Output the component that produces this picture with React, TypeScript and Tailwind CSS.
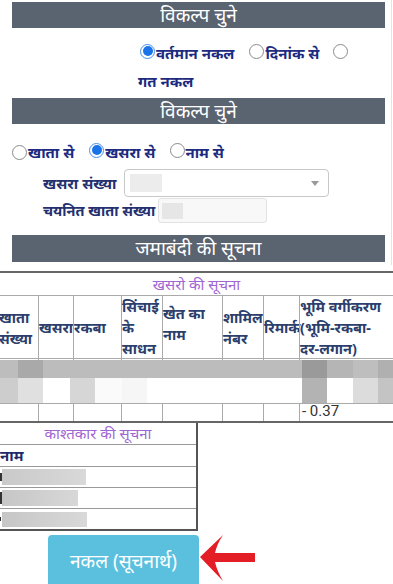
import React from "react";

const FONT = "font-[family-name:'Noto_Sans','Noto_Sans_Devanagari',sans-serif]";

function Radio({ checked = false }: { checked?: boolean }) {
  if (checked) {
    return (
      <span className="inline-block shrink-0 w-[15px] h-[15px] rounded-full border-[1.5px] border-[#4a8fe8] p-[1.5px] bg-white">
        <span className="block w-full h-full rounded-full bg-[#1a73e8]" />
      </span>
    );
  }
  return <span className="inline-block shrink-0 w-[15px] h-[15px] rounded-full border border-[#8a8a8a] bg-white" />;
}

function Bar({ text, h }: { text: string; h: string }) {
  return (
    <div className={`ml-[12px] w-[373px] ${h} bg-[#5a6370] flex items-center justify-center text-white text-[19px] leading-none`}>
      {text}
    </div>
  );
}

const COLS = "grid grid-cols-[38px_35px_48px_41px_60px_41px_36px_1fr]";

function Lines({ h, children }: { h: string; children?: React.ReactNode[] }) {
  const cells = Array.from({ length: 8 }, (_, i) => i);
  return (
    <div className={`${COLS} ${h}`}>
      {cells.map((i) => (
        <div key={i} className={i === 0 ? "" : "border-l border-[#aaaaaa]"}>
          {children ? children[i] : null}
        </div>
      ))}
    </div>
  );
}

export default function App() {
  const headers: React.ReactNode[] = [
    <>खाता<br />संख्या</>,
    "खसरा",
    "रकबा",
    <>सिंचाई<br />के<br />साधन</>,
    <>खेत का<br />नाम</>,
    <>शामिल<br />नंबर</>,
    "रिमार्क",
    <>भूमि वर्गीकरण<br />(भूमि-रकबा-<br />दर-लगान)</>,
  ];
  const strip1: [number, string][] = [
    [18, "#bdbdbd"], [25, "#a9a9a9"], [259, "#bcbcbc"], [25, "#9a9a9a"], [26, "#b5b5b5"], [25, "#bebebe"], [15, "#b0b0b0"],
  ];
  const strip2: [number, string][] = [
    [18, "#cdcdcd"], [25, "#e0e0e0"], [27, "#ffffff"], [25, "#d6d6d6"], [27, "#fafafa"], [25, "#f6f6f6"], [155, "#ffffff"], [25, "#b3b3b3"], [26, "#ffffff"], [25, "#dcdcdc"], [15, "#c4c4c4"],
  ];
  return (
    <div className={`w-[393px] h-[584px] overflow-hidden bg-white ${FONT}`}>
      <div className="w-[392px] border-r border-[#e4e4e4] pt-[2px] pb-[3px]">
        <Bar text="विकल्प चुने" h="h-[26px]" />
        <div className="pl-[138px] mt-[11px] text-[15px] font-bold text-[#1c2a80]">
          <div className="h-[28px] flex items-center">
            <span className="ml-[2px]"><Radio checked /></span>
            <span className="ml-[1px]">वर्तमान नकल</span>
            <span className="ml-[15px]"><Radio /></span>
            <span className="ml-[1px]">दिनांक से</span>
            <span className="ml-[14px]"><Radio /></span>
          </div>
          <div className="h-[28px] flex items-center">गत नकल</div>
        </div>
        <div className="mt-[3px]">
          <Bar text="विकल्प चुने" h="h-[26px]" />
        </div>
        <div className="pl-[12px] mt-[14px] h-[28px] flex items-center text-[15px] font-bold text-[#1c2a80]">
          <Radio />
          <span className="ml-[1px]">खाता से</span>
          <span className="ml-[15px]"><Radio checked /></span>
          <span className="ml-[1px]">खसरा से</span>
          <span className="ml-[15px]"><Radio /></span>
          <span className="ml-[0px]">नाम से</span>
        </div>
        <div className="pl-[43px] mt-[3px] flex items-center text-[15px] font-bold text-[#24306e]">
          <span className="w-[81px] whitespace-nowrap">खसरा संख्या</span>
          <div className="w-[205px] h-[28px] rounded-[4px] border border-[#c8c8c8] bg-white flex items-center px-[5px]">
            <div className="w-[32px] h-[18px] bg-[#ececec]" />
            <div className="ml-auto mr-[4px] w-0 h-0 border-l-[4px] border-r-[4px] border-t-[5px] border-l-transparent border-r-transparent border-t-[#999999]" />
          </div>
        </div>
        <div className="pl-[43px] mt-[1px] flex items-center text-[14.5px] font-bold text-[#24306e]">
          <span className="whitespace-nowrap mr-[3px]">चयनित खाता संख्या</span>
          <div className="w-[109px] h-[25px] rounded-[3px] border border-[#e2e2e2] bg-[#f8f8f8] flex items-center px-[3px]">
            <div className="w-[21px] h-[16px] bg-[#e6e6e6]" />
          </div>
        </div>
        <div className="mt-[12px]">
          <Bar text="जमाबंदी की सूचना" h="h-[27px]" />
        </div>
      </div>

      <div className="mt-[6px] border-t-2 border-b-2 border-[#666666]">
        <div className="h-[22px] flex items-center justify-center text-[15px] text-[#a066d3]">खसरो की सूचना</div>
        <div className={`${COLS} h-[63px] border-t border-[#aaaaaa] text-[14.5px] font-bold leading-[21px] text-[#2b3e6c]`}>
          {headers.map((h, i) => (
            <div key={i} className={`flex items-center whitespace-nowrap ${i === 0 ? "-ml-[1px]" : "border-l border-[#aaaaaa]"}`}>
              <span className={i === 4 ? "-mt-[7px]" : ""}>{h}</span>
            </div>
          ))}
        </div>
        <div className="border-t border-[#aaaaaa]">
          <Lines h="h-[1px]" />
          <div className="flex h-[18px]">
            {strip1.map(([w, c], i) => (
              <div key={i} className="h-full" style={{ width: w, background: c }} />
            ))}
          </div>
          <div className="flex h-[25px]">
            {strip2.map(([w, c], i) => (
              <div key={i} className="h-full" style={{ width: w, background: c }} />
            ))}
          </div>
        </div>
        <div className="border-t border-[#aaaaaa]">
          <Lines h="h-[17px]">
            {[null, null, null, null, null, null, null,
              <span key="v" className="block pl-[2px] text-[15px] leading-[15px] text-[#333333] font-[family-name:Roboto,sans-serif]">- 0.37</span>]}
          </Lines>
        </div>
      </div>

      <div className="w-[198px] border-r-2 border-b-2 border-[#555555]">
        <div className="h-[22px] flex items-center justify-center text-[15px] text-[#a066d3] border-b border-[#999999]">
          काश्तकार की सूचना
        </div>
        <div className="h-[22px] flex items-center text-[15px] font-bold text-[#1d2a6a] border-b border-[#999999]">नाम</div>
        <div className="h-[21px] flex items-center border-b border-[#999999]">
          <div className="w-[2px] h-[8px] bg-[#333333]" />
          <div className="w-[84px] h-[16px] bg-gradient-to-r from-[#c9c9c9] to-[#d9d9d9]" />
        </div>
        <div className="h-[21px] flex items-center border-b border-[#999999]">
          <div className="w-[2px] h-[12px] bg-[#333333]" />
          <div className="w-[76px] h-[16px] bg-gradient-to-r from-[#c6c6c6] to-[#d8d8d8]" />
        </div>
        <div className="h-[20px] flex items-center">
          <div className="w-[1px] h-[4px] bg-[#333333]" />
          <div className="ml-[1px] w-[85px] h-[15px] bg-gradient-to-r from-[#c6c6c6] to-[#d9d9d9]" />
        </div>
      </div>

      <div className="mt-[4px] flex items-start">
        <div className="ml-[48px] w-[151px] h-[52px] rounded-[4px] bg-[#5bc0de] flex items-center justify-center text-white text-[19px]">
          नकल (सूचनार्थ)
        </div>
        <svg width="60" height="50" viewBox="0 0 60 50" className="-mt-[1px]">
          <path
            d="M1 23 L24 1 Q18 10 16 19 L56 19 L56 28 L16 28 Q18 37 24 47 Z"
            fill="#e41e26"
          />
        </svg>
      </div>
    </div>
  );
}
